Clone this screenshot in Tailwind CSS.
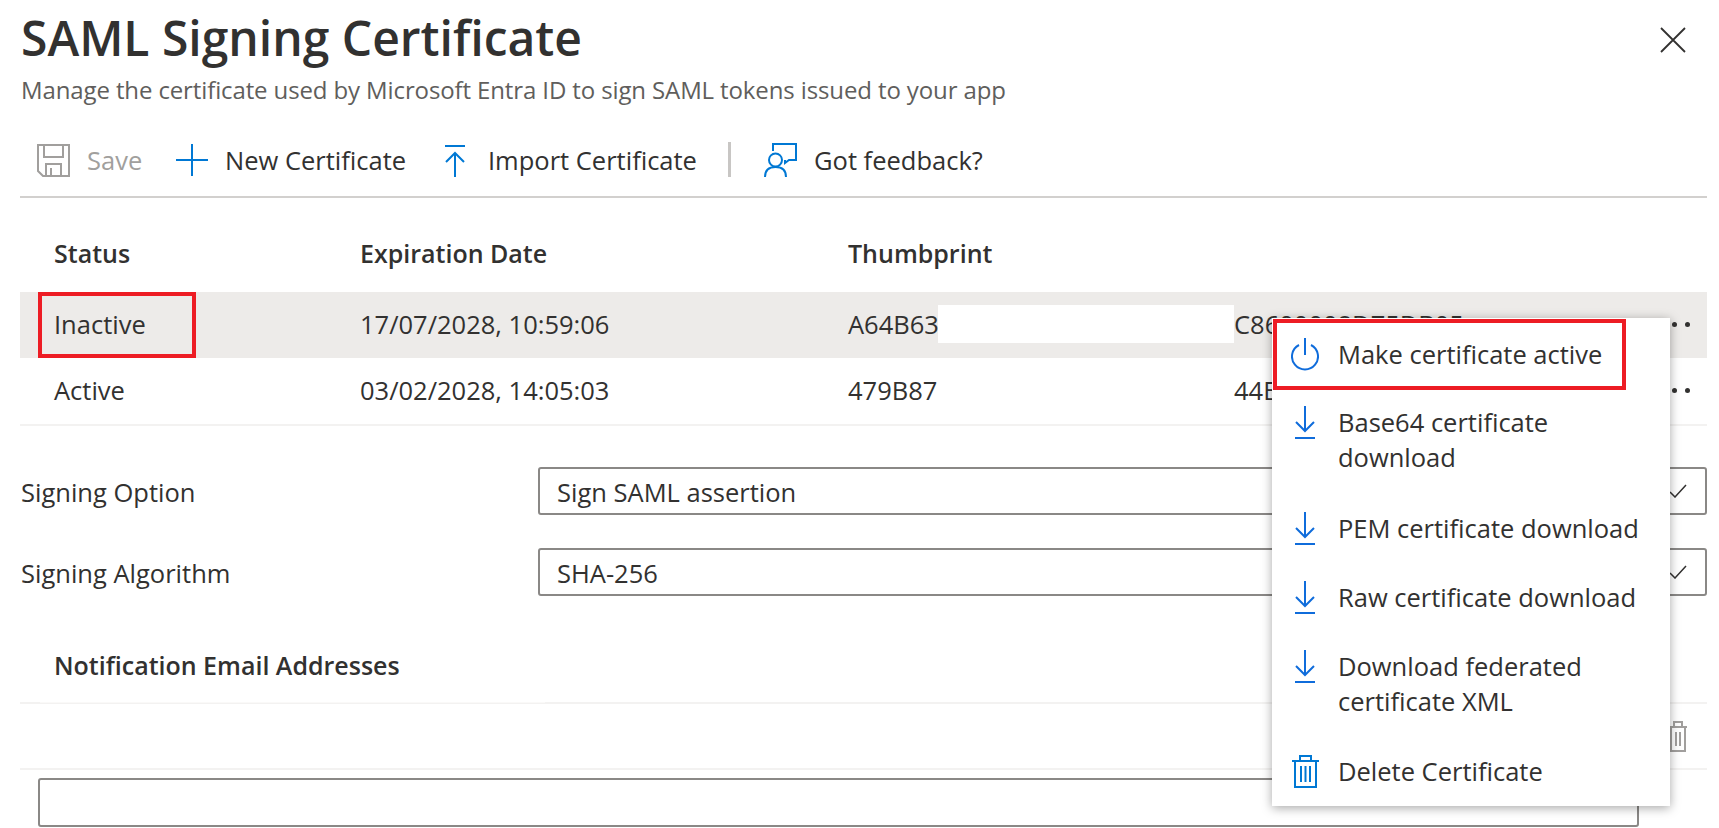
<!DOCTYPE html>
<html lang="en">
<head>
    <meta charset="UTF-8">
    <title>SAML Signing Certificate</title>
    <script src="https://cdn.jsdelivr.net/npm/@tailwindcss/browser@4"></script>
</head>
<body class="relative h-[828px] w-[1719px] overflow-hidden bg-white font-['Open_Sans',sans-serif] text-[25.500px] text-[#323130]">
    <!-- Header -->
    <header class="flex w-[1707px] justify-between pl-[21px]">
        <div>
            <h1 class="mt-2 h-[60px] text-[48px] leading-[60px] font-semibold">SAML Signing Certificate</h1>
            <p class="mt-1 h-9 text-[24px] leading-9 tracking-[-0.12px] text-[#605e5c]">Manage the certificate used by Microsoft Entra ID to sign SAML tokens issued to your app</p>
        </div>
        <svg class="mt-[27px] mr-[21px]" width="26" height="26" viewBox="0 0 26 26" fill="none" stroke="#323130" stroke-width="1.8"><path d="M1 1l24 24M25 1L1 25"/></svg>
    </header>

    <!-- Toolbar -->
    <div class="mt-[22px] ml-5 flex h-[68px] w-[1687px] items-center border-b-2 border-[#d2d0ce] pb-[6px] pl-[17px]">
        <svg width="33" height="33" viewBox="0 0 33 33" fill="none" stroke="#a19f9d" stroke-width="2"><path d="M1 1h31v31H6l-5-5z"/><path d="M7 1v12h19V1M9 32V20h15v12M14 24v8"/></svg>
        <span class="ml-[17px] w-[89px] text-[#a19f9d]">Save</span>
        <svg width="32" height="32" viewBox="0 0 32 32" fill="none" stroke="#0078d4" stroke-width="2"><path d="M16 0v32M0 16h32"/></svg>
        <span class="ml-[17px] w-[220px]">New Certificate</span>
        <svg width="20" height="33" viewBox="0 0 20 33" fill="none" stroke="#0078d4" stroke-width="2"><path d="M0 2h20M10 33V10M1 18l9-9 9 9"/></svg>
        <span class="ml-[23px] w-[276px]">Import Certificate</span>
        <svg width="33" height="34" viewBox="0 0 33 34" fill="none" stroke="#0078d4" stroke-width="2"><path d="M9 8V1h23v16h-7l-4 3v-3"/><circle cx="11.500" cy="17" r="6.500"/><path d="M1 34c0-7 4-10 10.500-10S22 27 22 34"/></svg>
        <span class="ml-[17px]">Got feedback?</span>
        <div class="absolute top-[142px] left-[728px] h-[35px] w-[3px] bg-[#c8c6c4]"></div>
    </div>

    <!-- Certificates table -->
    <section class="ml-5 w-[1687px]">
        <div class="flex h-[94px] items-center pt-[18px] text-[25px] font-semibold">
            <div class="w-[340px] pl-[34px]">Status</div>
            <div class="w-[488px]">Expiration Date</div>
            <div>Thumbprint</div>
        </div>
        <div class="relative flex h-[66px] items-center bg-[#edebe9] pb-[2px]">
            <div class="w-[340px] pl-[34px]">Inactive</div>
            <div class="w-[488px]">17/07/2028, 10:59:06</div>
            <div class="w-[386px]">A64B63</div>
            <div>C8600008D75DB05</div>
            <div class="ml-auto flex gap-2 pr-[17px]">
                <i class="size-[5px] rounded-full bg-[#323130]"></i><i class="size-[5px] rounded-full bg-[#323130]"></i><i class="size-[5px] rounded-full bg-[#323130]"></i>
            </div>
            <div class="absolute top-[13px] left-[918px] h-[38px] w-[296px] bg-white"></div>
            <div class="absolute top-0 left-[18px] h-[66px] w-[158px] border-4 border-[#ed1c24]"></div>
        </div>
        <div class="flex h-[68px] items-center border-b-2 border-[#f3f2f1] pb-[2px]">
            <div class="w-[340px] pl-[34px]">Active</div>
            <div class="w-[488px]">03/02/2028, 14:05:03</div>
            <div class="w-[386px]">479B87</div>
            <div>44E1A60C27F9D30</div>
            <div class="ml-auto flex gap-2 pr-[17px]">
                <i class="size-[5px] rounded-full bg-[#323130]"></i><i class="size-[5px] rounded-full bg-[#323130]"></i><i class="size-[5px] rounded-full bg-[#323130]"></i>
            </div>
        </div>
    </section>

    <!-- Signing options -->
    <div class="mt-[41px] flex h-12 w-[1707px] items-center pl-[21px]">
        <label class="w-[517px] pt-[2px]">Signing Option</label>
        <div class="flex h-12 flex-1 items-center justify-between rounded-[3px] border-2 border-[#8a8886] pr-[18px] pl-[17px]">
            <span class="pt-[2px]">Sign SAML assertion</span>
            <svg width="18" height="14" viewBox="0 0 18 14" fill="none" stroke="#323130" stroke-width="1.500"><path d="M1 8l5 5L17 1"/></svg>
        </div>
    </div>
    <div class="mt-[33px] flex h-12 w-[1707px] items-center pl-[21px]">
        <label class="w-[517px] pt-[2px]">Signing Algorithm</label>
        <div class="flex h-12 flex-1 items-center justify-between rounded-[3px] border-2 border-[#8a8886] pr-[18px] pl-[17px]">
            <span class="pt-[2px]">SHA-256</span>
            <svg width="18" height="14" viewBox="0 0 18 14" fill="none" stroke="#323130" stroke-width="1.500"><path d="M1 8l5 5L17 1"/></svg>
        </div>
    </div>

    <!-- Notification email addresses -->
    <section class="ml-5 w-[1687px]">
        <div class="flex h-[106px] items-center pt-[34px] pl-[34px] text-[25px] font-semibold">Notification Email Addresses</div>
        <div class="flex h-[2px] w-full items-start bg-[#f3f2f1]">
            <div class="ml-5 h-px w-[505px] bg-[#faf9f8]"></div>
        </div>
        <div class="flex h-[64px] items-center justify-end pr-[20px]">
            <svg width="18" height="32" viewBox="0 0 18 32" fill="none" stroke="#a19f9d" stroke-width="2"><path d="M0 7h18M5 7V2h8v5M2 7v24h14V7M7 12v14M11 12v14"/></svg>
        </div>
        <div class="h-[2px] w-full bg-[#f3f2f1]"></div>
        <div class="mt-2 ml-[18px] h-[49px] w-[1601px] rounded-[3px] border-2 border-[#8a8886]"></div>
    </section>

    <!-- Row action menu -->
    <div class="absolute top-[318px] left-[1272px] h-[488px] w-[398px] bg-white pt-[2px] shadow-[0_2px_10px_rgba(0,0,0,0.35)]">
        <div class="absolute top-px left-px h-[71px] w-[353px] border-[4.500px] border-[#ed1c24]"></div>
        <div class="flex h-[70px] items-center pb-[2px]">
            <div class="flex w-[66px] justify-center"><svg width="28" height="33" viewBox="0 0 28 33" fill="none" stroke="#0f6cdb" stroke-width="2"><path d="M14 0v17"/><path d="M8 7a13 13 0 1 0 12 0"/></svg></div>
            <span class="leading-[35px]">Make certificate active</span>
        </div>
        <div class="flex h-[104px] items-start pt-[15px]">
            <div class="flex h-[35px] w-[66px] items-center justify-center"><svg width="20" height="33" viewBox="0 0 20 33" fill="none" stroke="#0f6cdb" stroke-width="2"><path d="M10 0v25M1 16l9 9 9-9M0 32h20"/></svg></div>
            <span class="leading-[35px]">Base64 certificate<br>download</span>
        </div>
        <div class="flex h-[69px] items-center">
            <div class="flex w-[66px] justify-center"><svg width="20" height="33" viewBox="0 0 20 33" fill="none" stroke="#0f6cdb" stroke-width="2"><path d="M10 0v25M1 16l9 9 9-9M0 32h20"/></svg></div>
            <span class="leading-[35px]">PEM certificate download</span>
        </div>
        <div class="flex h-[70px] items-center pb-[2px]">
            <div class="flex w-[66px] justify-center"><svg width="20" height="33" viewBox="0 0 20 33" fill="none" stroke="#0f6cdb" stroke-width="2"><path d="M10 0v25M1 16l9 9 9-9M0 32h20"/></svg></div>
            <span class="leading-[35px]">Raw certificate download</span>
        </div>
        <div class="flex h-[105px] items-start pt-[16px]">
            <div class="flex h-[35px] w-[66px] items-center justify-center"><svg width="20" height="33" viewBox="0 0 20 33" fill="none" stroke="#0f6cdb" stroke-width="2"><path d="M10 0v25M1 16l9 9 9-9M0 32h20"/></svg></div>
            <span class="leading-[35px]">Download federated<br>certificate XML</span>
        </div>
        <div class="flex h-[68px] items-center pb-[2px]">
            <div class="flex w-[66px] justify-center"><svg width="27" height="33" viewBox="0 0 27 33" fill="none" stroke="#0078d4" stroke-width="2"><path d="M0 6h27M8 6V1h11v5M3 6v26h21V6M9 11v16M13.500 11v16M18 11v16"/></svg></div>
            <span class="leading-[35px]">Delete Certificate</span>
        </div>
    </div>
</body>
</html>
